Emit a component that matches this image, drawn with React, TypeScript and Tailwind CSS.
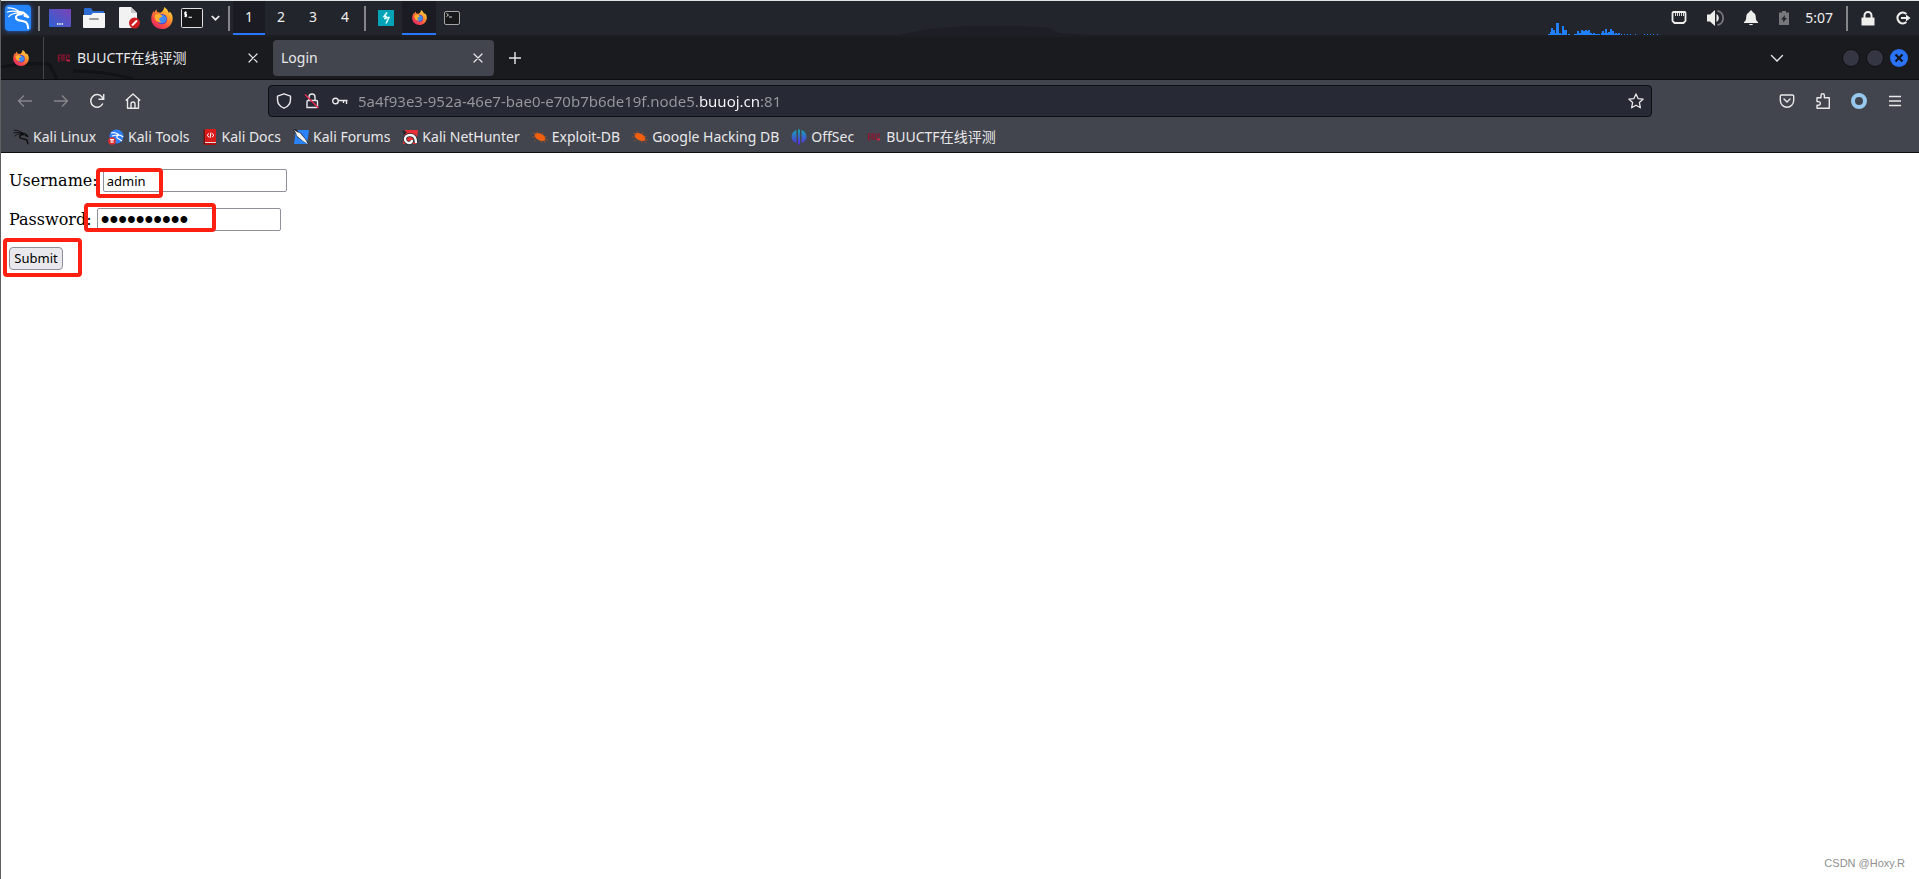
import React, { useState } from 'react';

interface IconProps {
  className?: string;
}

function Dragon({ className }: IconProps) {
  return (
    <svg viewBox="0 0 26 26" className={className} fill="none" stroke="currentColor" strokeLinecap="round" strokeLinejoin="round">
      <path strokeWidth="1.400" d="M2 2c5 0 9 1 13 4.500M1.500 6.500c5-1.500 9-1 13 .5M3 11.500c3-3 7-4.500 12-3.500" />
      <path strokeWidth="2.300" d="M13 7c4-1 6 0 8 2l3 3-4-1.500M17 9c-5 0-7 2-6 4.500 1.500 3.500 8 1.500 11 4.500 1.500 1.500 2 3.500 2 6" />
    </svg>
  );
}

function Firefox({ className }: IconProps) {
  return (
    <svg viewBox="0 0 24 24" className={className}>
      <defs>
        <linearGradient id="fxFlame" x1="0.9" y1="0.05" x2="0.2" y2="1">
          <stop offset="0" stopColor="#ffe14a" />
          <stop offset="0.35" stopColor="#ff9a2c" />
          <stop offset="0.7" stopColor="#fb4c42" />
          <stop offset="1" stopColor="#dc2468" />
        </linearGradient>
      </defs>
      <path fill="url(#fxFlame)" d="M14.500 0c3 2 4 4 5 6.500.6-.3.800-1 .8-1.700C23 7.500 24 10 23.600 13.500 23 19.500 18 24 12 24 5.500 24 .3 19.200.3 12.800.3 9.500 1.300 6.500 3.200 4.200c0 .8.1 1.500.4 2C4.200 4.500 5 3.200 6 2.400c0 1.500.4 2.500 1.300 3.400 1.200-.2 2.200.1 3 .6 1.700-1.300 3.800-2.900 4.200-6.400z" />
      <circle cx="12" cy="13.200" r="5.600" fill="#5b3fc4" />
      <path fill="#3f8cf3" d="M8 9.500c3-2.500 8-.5 9 3-.2 3-2 5-5 5.300-3.500 0-5-3-4-8.300z" />
      <path fill="#ffb02e" d="M4 9c2.500-2 6-1.500 8.500.8-1 1.700-3 1.400-3.500 2.700-.4 1.600.5 3 2.500 4.200-4.500.8-8-2.700-7.500-7.700z" />
    </svg>
  );
}

function Buu({ className }: IconProps) {
  return (
    <svg viewBox="0 0 16 16" className={className} fill="none" stroke="#8e1530" strokeWidth="1.200">
      <path d="M2.500 5v6M2 5h3M2 8h3M2 11h2M6 11V5h3M8 5v6M10.500 11V6M10 5h3v3" />
      <path stroke="#d52444" d="M11 10.500h3" strokeWidth="1.800" />
    </svg>
  );
}

function Close({ className }: IconProps) {
  return (
    <svg viewBox="0 0 16 16" className={className} fill="none" stroke="currentColor" strokeWidth="1.200" strokeLinecap="round">
      <path d="M4 4l8 8M12 4l-8 8" />
    </svg>
  );
}

function Bug() {
  return (
    <svg viewBox="0 0 16 16" className="size-4" fill="none" stroke="#b8541f" strokeWidth="0.600">
      <ellipse cx="8" cy="8" rx="5.800" ry="3.300" transform="rotate(28 8 8)" fill="#f2600f" stroke="none" />
      <path d="M1 4l4 1.500M0 8h3M4 11l-2 1M6 5L5 2M10 6l1-3M12 8l3-1M12 11l4 0M9 11l1 3M12 12l2 2" />
    </svg>
  );
}

function ToolsIcon() {
  return (
    <svg viewBox="0 0 16 16" className="size-4">
      <circle cx="8.500" cy="7.500" r="7" fill="#2f7df6" />
      <path d="M3 4c3-1 6 0 8 2 2 0 3 1 4 2M4 7c3-1 5-1 7-1-3 1-3 3 0 4l3 2" fill="none" stroke="#fff" strokeWidth="1.200" />
      <circle cx="4" cy="12" r="3.800" fill="#dd2c2c" />
      <path d="M2 10.500h4M3.200 10.500v3.500M4.900 10.500v3.500" stroke="#fff" fill="none" />
    </svg>
  );
}

function DocsIcon() {
  return (
    <svg viewBox="0 0 16 16" className="size-4">
      <path fill="#6d1414" d="M1.500 1l2-1v16l-2-1z" />
      <path fill="#d91a1a" d="M3 0h11v13H3z" />
      <path fill="#e8d9d9" d="M3 13h11v1H3z" />
      <path fill="#a81212" d="M3 14h11v2H3z" />
      <path d="M7 4.500l-2 1.800 2 1.800M10 4.500l2 1.800-2 1.800M9 3.500L8 9" stroke="#fff" fill="none" />
    </svg>
  );
}

function ForumsIcon() {
  return (
    <svg viewBox="0 0 16 16" className="size-4">
      <path fill="#2a83f8" d="M3 1h13l-2 14H1z" />
      <path fill="#23262d" d="M0 1l3-1 3 3 2 1 6 8 2 3-5-2-7-5-1-3z" />
      <path fill="#f3f3f3" d="M1 1l3 2 3 1 5 6 3 5-5-3-6-5-1-3z" />
    </svg>
  );
}

function NetHunterIcon() {
  return (
    <svg viewBox="0 0 16 16" className="size-4">
      <path fill="#ec2f36" d="M3 1h13l-2 14H1z" />
      <path d="M14 14c0-5-2-8-6-8-3 0-5 2-5 4s2 4 4 4 3-1 3-3" fill="none" stroke="#23262d" strokeWidth="4" />
      <path d="M14 14c0-5-2-8-6-8-3 0-5 2-5 4s2 4 4 4 3-1 3-3" fill="none" stroke="#f5f5f5" strokeWidth="2.400" />
      <path fill="#23262d" d="M0 1l5 2-3 3z" />
    </svg>
  );
}

function OffSecIcon() {
  return (
    <svg viewBox="0 0 16 16" className="size-4">
      <defs>
        <linearGradient id="offsec" x1="0" y1="0" x2="0" y2="1">
          <stop offset="0" stopColor="#16a5b5" />
          <stop offset="1" stopColor="#5a2be0" />
        </linearGradient>
      </defs>
      <path fill="url(#offsec)" d="M5.500 1v13C2.500 13 .5 11 .5 7.800S2.500 2 5.500 1zM7 .5h2v15H7zM10.500 1v13c3-1 5-3 5-6.200S13.500 2 10.500 1z" />
    </svg>
  );
}

const bookmarks = [
  { label: 'Kali Linux', icon: <Dragon className="size-4 text-[#0b0c0e]" /> },
  { label: 'Kali Tools', icon: <ToolsIcon /> },
  { label: 'Kali Docs', icon: <DocsIcon /> },
  { label: 'Kali Forums', icon: <ForumsIcon /> },
  { label: 'Kali NetHunter', icon: <NetHunterIcon /> },
  { label: 'Exploit-DB', icon: <Bug /> },
  { label: 'Google Hacking DB', icon: <Bug /> },
  { label: 'OffSec', icon: <OffSecIcon /> },
  { label: 'BUUCTF在线评测', icon: <Buu className="size-4" /> },
];

// bar heights in px, oldest sample last
const cpuLoad = [1, 3, 7, 5, 2, 12, 12, 2, 1, 9, 5, 5, 0, 1, 0, 0, 0, 1, 1, 4, 2, 5, 4, 4, 5, 4, 5, 2, 1, 2, 1, 1, 1, 0, 2, 4, 2, 6, 2, 3, 6, 4, 1, 2, 1, 2, 0, 1, 0, 1, 0, 1, 0, 1, 0, 0, 1, 0, 0, 0, 0, 0, 1, 0, 1, 0, 1, 0, 1, 0, 1];

function Separator() {
  return <div className="h-[25px] w-0.5 shrink-0 bg-[#85868a]" />;
}

function Panel() {
  const [workspace, setWorkspace] = useState(1);
  return (
    <header className="relative flex h-[35px] shrink-0 items-center justify-between border-t border-[#dfe5e5] bg-[#23252d] text-[#eeeeec]">
      <svg viewBox="0 0 190 10" className="absolute bottom-0 left-[898px] h-2.5 w-[190px]">
        <path fill="#1e1f26" d="M0 10C30 2 70 0 105 1l38 1c10 0 13 6 19 6l28 2z" />
      </svg>

      <div className="relative flex h-full items-center">
        <button aria-label="Applications" className="mr-0.5 ml-1 flex size-[26px] items-center justify-center rounded-sm bg-[#2484fb] shadow-[0_0_4px_#2367d8]">
          <Dragon className="size-6 text-white" />
        </button>
        <div className="ml-[5px] flex"><Separator /></div>
        <div className="ml-[9px] flex items-center gap-3">
          <button aria-label="Show desktop">
            <svg viewBox="0 0 22 18" className="h-[18px] w-[22px]">
              <defs>
                <linearGradient id="desk" x1="0" y1="1" x2="1" y2="0">
                  <stop offset="0" stopColor="#2e62d6" />
                  <stop offset="1" stopColor="#7b43b4" />
                </linearGradient>
              </defs>
              <rect width="22" height="18" rx="1" fill="url(#desk)" />
              <path d="M8 15h1.500M10.300 15h1.500M12.600 15h1.500" stroke="#fff" strokeWidth="1.500" />
            </svg>
          </button>
          <button aria-label="Files">
            <svg viewBox="0 0 22 20" className="h-5 w-[22px]">
              <path fill="#2c6bd3" d="M1 1a1 1 0 011-1h6l2 3h10a1 1 0 011 1v5H1z" />
              <path fill="#f4f4f4" d="M0 7h8l2-2h12v14a1 1 0 01-1 1H1a1 1 0 01-1-1z" />
              <path stroke="#9b9b9b" strokeWidth="1.800" strokeLinecap="round" d="M7 11h8" />
            </svg>
          </button>
          <button aria-label="Text editor" className="ml-0.5">
            <svg viewBox="0 0 22 22" className="size-[22px]">
              <path fill="#f2f2f2" d="M1 0h11l6 6v15H1a1 1 0 01-1-1V1a1 1 0 011-1z" />
              <path fill="#c6c6c6" d="M12 0l6 6h-6z" />
              <circle cx="15.500" cy="16" r="5.500" fill="#cf1c20" />
              <path d="M13 18.500l5-5" stroke="#fff" strokeWidth="2" />
            </svg>
          </button>
          <button aria-label="Firefox" className="-ml-0.5"><Firefox className="size-[22px]" /></button>
          <button aria-label="Terminal" className="-ml-1">
            <svg viewBox="0 0 22 20" className="h-5 w-[22px]">
              <rect x="0.500" y="0.500" width="21" height="19" rx="1" fill="#17181a" stroke="#e2e2e2" />
              <path d="M5.800 4.500H3.800v1.800h1.700v1.800H3.300M4.600 3.200v6M7.500 9.200h3.500" fill="none" stroke="#fff" strokeWidth="1.100" />
            </svg>
          </button>
        </div>
        <button aria-label="More terminals" className="mr-2 ml-2">
          <svg viewBox="0 0 9 6" className="h-1.5 w-[9px]" fill="none" stroke="#eee" strokeWidth="1.700"><path d="M0.800 1l3.700 3.700L8.200 1" /></svg>
        </button>
        <Separator />
        <div className="ml-[3px] flex h-full text-sm">
          {[1, 2, 3, 4].map((n) => (
            <button
              key={n}
              onClick={() => setWorkspace(n)}
              className={n === workspace ? 'w-8 border-b-2 border-[#2777ff] bg-[#1b1c23]' : 'w-8 border-b-2 border-transparent'}
            >
              {n}
            </button>
          ))}
        </div>
        <div className="ml-[3px] flex"><Separator /></div>
        <button aria-label="Burp Suite" className="mr-2 ml-3">
          <svg viewBox="0 0 16 16" className="size-4">
            <path fill="#04a3b8" d="M0 0h16v16H0z" />
            <path d="M9 2.500L6 6.500h2v2H6M8 7.500h3L8 13.500" fill="none" stroke="#e9fdff" strokeWidth="1.500" />
          </svg>
        </button>
        <button aria-label="Login - Firefox" className="flex h-full w-[34px] items-center justify-center border-b-2 border-[#2777ff] bg-[#1b1c23]">
          <Firefox className="size-[15px]" />
        </button>
        <button aria-label="Terminal window" className="ml-2">
          <svg viewBox="0 0 16 14" className="h-3.5 w-4">
            <rect x="0.500" y="0.500" width="15" height="13" rx="1.500" fill="#17181a" stroke="#a5a5a5" />
            <path d="M2.500 2.500l2 1.500-2 1.500M5 6h3" fill="none" stroke="#e5e5e5" strokeWidth="0.900" />
          </svg>
        </button>
      </div>

      <div className="flex h-full items-center pr-2">
        <svg viewBox="0 0 111 12" className="mr-3 h-3 w-[111px] self-end" shapeRendering="crispEdges">
          {cpuLoad.map((h, i) => (
            <rect key={i} x={Math.round(i * 1.55)} y={12 - h} width={h > 0 ? (i > 46 ? 1 : 2) : 0} height={h} fill="#2080ff" />
          ))}
        </svg>
        <div className="flex items-center">
          <svg viewBox="0 0 16 14" className="h-3.5 w-4">
            <path d="M2.500 1h11a1 1 0 011 1v8l-2 2h-9l-2-2V2a1 1 0 011-1z" fill="none" stroke="#eeeeec" strokeWidth="1.800" />
            <path d="M4.500 2v3M6.500 2v3M8.500 2v3M10.500 2v3M12.500 2v3" stroke="#eeeeec" strokeWidth="0.900" />
          </svg>
          <svg viewBox="0 0 18 18" className="ml-5 size-[18px]">
            <path fill="#eeeeec" d="M0 5.500h3L8 1v16l-5-4.500H0zM9.500 5c3 1.500 3 6.500 0 8z" />
            <path fill="none" stroke="#77787c" strokeWidth="1.800" d="M10.500 2c7.500 1 7.500 13 0 14" />
          </svg>
          <svg viewBox="0 0 16 16" className="ml-[18px] size-4" fill="#eeeeec">
            <path d="M8 0.500c1 0 1.500.6 1.500 1.500C12 3 12.800 5 12.800 7.500c0 2.500.7 3.500 2.200 4.500v1H1v-1c1.500-1 2.200-2 2.200-4.500C3.200 5 4 3 6.500 2 6.500 1.100 7 .5 8 .5zM6 14h4c-.4 1.600-3.600 1.600-4 0z" />
          </svg>
          <svg viewBox="0 0 10 14" className="ml-5 h-3.5 w-2.5">
            <path fill="#77787b" d="M3 0h4v1.500h3V14H0V1.500h3z" />
            <path fill="#23252d" d="M6 4L2 8.500h2.300L4 11.500l4-4.500H5.700z" />
          </svg>
          <time className="ml-4 text-sm">5:07</time>
        </div>
        <div className="ml-[13px] flex"><Separator /></div>
        <svg viewBox="0 0 14 15" className="ml-[13px] h-[15px] w-3.5">
          <path fill="#eeeeec" d="M1 6.500h12a.5.5 0 01.5.5v7.500H.5V7a.5.5 0 01.5-.5z" />
          <path fill="none" stroke="#eeeeec" strokeWidth="2" d="M3.500 7V4.500a3.500 3.500 0 017 0V7" />
        </svg>
        <svg viewBox="0 0 16 14" className="ml-5 h-3.5 w-4">
          <path fill="none" stroke="#eeeeec" strokeWidth="2.200" d="M11.300 3a5.300 5.300 0 100 8" />
          <path fill="#eeeeec" d="M6 6h5V3.500L15.500 7 11 10.500V8H6z" />
        </svg>
      </div>
    </header>
  );
}

function TabStrip() {
  return (
    <div className="relative flex h-[45px] shrink-0 items-center justify-between border-t-2 border-b border-t-[#1d1e23] border-b-[#0c0d10] bg-[#1a1b1f] text-sm text-[#e8e8ea]">
      <svg viewBox="0 0 140 18" className="absolute bottom-0 left-0 h-[18px] w-[140px]" fill="none" stroke="#121317" strokeWidth="3">
        <path d="M0 6c16-3 32-4 48-3l8 15M72 10c20 0 40 2 60 8" />
      </svg>
      <div className="relative flex h-full items-center">
        <button aria-label="Firefox View" className="flex h-full w-[43px] items-center justify-center border-r border-[#46474c] pr-0.5">
          <Firefox className="size-4" />
        </button>
        <div className="flex w-[229px] items-center justify-between px-3">
          <button className="flex items-center gap-[5px]">
            <Buu className="size-4" />
            <span>BUUCTF在线评测</span>
          </button>
          <button aria-label="Close BUUCTF" className="flex"><Close className="size-4" /></button>
        </div>
        <div className="flex h-9 w-[221px] items-center justify-between rounded bg-[#42454d] px-2">
          <button>Login</button>
          <button aria-label="Close Login" className="flex"><Close className="size-4" /></button>
        </div>
        <button aria-label="New tab" className="ml-3.5">
          <svg viewBox="0 0 14 14" className="size-3.5" fill="none" stroke="currentColor" strokeWidth="1.400"><path d="M7 1v12M1 7h12" /></svg>
        </button>
      </div>
      <div className="flex items-center gap-1.5 pr-[11px]">
        <button aria-label="List all tabs" className="mr-[52px]">
          <svg viewBox="0 0 14 8" className="h-2 w-3.5" fill="none" stroke="currentColor" strokeWidth="1.300" strokeLinecap="round"><path d="M1.500 1.500L7 7l5.500-5.500" /></svg>
        </button>
        <button aria-label="Minimize" className="size-[18px] rounded-full border border-[#0f1014] bg-[#343743]" />
        <button aria-label="Maximize" className="size-[18px] rounded-full border border-[#0f1014] bg-[#343743]" />
        <button aria-label="Close window" className="flex size-[18px] items-center justify-center rounded-full bg-[#2b73f6] text-[#10131b]">
          <svg viewBox="0 0 10 10" className="size-2.5" fill="none" stroke="currentColor" strokeWidth="2.200"><path d="M1.500 1.500l7 7M8.500 1.500l-7 7" /></svg>
        </button>
      </div>
    </div>
  );
}

function Toolbar() {
  return (
    <div className="flex h-10 shrink-0 items-center bg-[#42454d] pt-0.5 text-[#e8e8ea]">
      <nav className="flex w-[267px] shrink-0 items-center gap-5 pl-4">
        <button aria-label="Back" className="text-[#85878c]">
          <svg viewBox="0 0 16 16" className="size-4" fill="none" stroke="currentColor" strokeWidth="1.300"><path d="M15 8H1.500M7 2.500L1.500 8 7 13.500" /></svg>
        </button>
        <button aria-label="Forward" className="text-[#85878c]">
          <svg viewBox="0 0 16 16" className="size-4" fill="none" stroke="currentColor" strokeWidth="1.300"><path d="M1 8h13.500M9 2.500L14.500 8 9 13.500" /></svg>
        </button>
        <button aria-label="Reload">
          <svg viewBox="0 0 16 16" className="size-4" fill="none" stroke="currentColor" strokeWidth="1.500"><path d="M13.800 10.500A6.300 6.300 0 1113 4l1.500 2M14.700 1v5.300H9.500" /></svg>
        </button>
        <button aria-label="Home">
          <svg viewBox="0 0 16 16" className="size-4" fill="none" stroke="currentColor" strokeWidth="1.400" strokeLinejoin="round"><path d="M0.800 7.500L8 1l7.200 6.500M2.500 6.500v8.700h11V6.500M6 15v-4a2 2 0 014 0v4" /></svg>
        </button>
      </nav>
      <div className="flex h-8 flex-1 items-center rounded border border-[#0e0f13] bg-[#272935] px-[7px]">
        <svg viewBox="0 0 16 16" className="size-4 shrink-0" fill="none" stroke="currentColor" strokeWidth="1.400" strokeLinejoin="round">
          <path d="M8 .8l6.500 2.300v3.400c0 4-2 7-6.500 8.700-4.500-1.700-6.500-4.700-6.500-8.700V3.100z" />
        </svg>
        <svg viewBox="0 0 16 16" className="ml-3 size-4 shrink-0" fill="none" stroke="currentColor" strokeWidth="1.400">
          <path d="M5 7V4a3 3 0 016 0v3M3 14.500V8.500a1 1 0 011-1h8.500a1 1 0 011 1v5a1 1 0 01-1 1z" />
          <path d="M1 1.500l13.500 13.500" stroke="#e22850" strokeWidth="1.500" />
        </svg>
        <svg viewBox="0 0 16 10" className="ml-3 h-2.5 w-4 shrink-0" fill="none" stroke="currentColor" strokeWidth="1.400">
          <circle cx="3.500" cy="5" r="2.800" />
          <path d="M6.300 4.500H15.500M11.500 4.500V7M14.500 4.500V8" />
        </svg>
        <input
          aria-label="Address"
          defaultValue="5a4f93e3-952a-46e7-bae0-e70b7b6de19f.node5.buuoj.cn:81"
          className="ml-2.5 min-w-0 flex-1 bg-[linear-gradient(90deg,#96989d_341px,#fbfbfe_341px,#fbfbfe_402px,#96989d_402px)] bg-clip-text text-[15px] text-transparent caret-white outline-none"
        />
        <button aria-label="Bookmark this page">
          <svg viewBox="0 0 16 16" className="size-4" fill="none" stroke="currentColor" strokeWidth="1.300" strokeLinejoin="round"><path d="M8 .9l2.100 4.700 5.100.5-3.800 3.500 1 5.200L8 12.200l-4.400 2.600 1-5.200L.8 6.100l5.100-.5z" /></svg>
        </button>
      </div>
      <div className="flex w-[267px] shrink-0 items-center justify-end gap-5 pr-4">
        <button aria-label="Save to Pocket">
          <svg viewBox="0 0 16 16" className="size-4" fill="none" stroke="currentColor" strokeWidth="1.400" strokeLinecap="round"><path d="M2.500 2h11a1.200 1.200 0 011.200 1.200V7.500a6.700 6.700 0 01-13.400 0V3.200A1.200 1.200 0 012.500 2zM5 6l3 3 3-3" /></svg>
        </button>
        <button aria-label="Extensions">
          <svg viewBox="0 0 16 16" className="size-4" fill="none" stroke="currentColor" strokeWidth="1.400" strokeLinejoin="round"><path d="M2 7V4.700h4V2.500a1.700 1.700 0 013.400 0v2.200h4.900v10.500H2v-3h1.500a1.800 1.800 0 000-3.600H2z" /></svg>
        </button>
        <button aria-label="Proxy">
          <svg viewBox="0 0 16 16" className="size-4"><circle cx="8" cy="8" r="6" fill="none" stroke="#97c9ef" strokeWidth="4" /></svg>
        </button>
        <button aria-label="Open application menu">
          <svg viewBox="0 0 16 16" className="size-4" stroke="currentColor" strokeWidth="1.300"><path d="M2 3.500h12M2 8h12M2 12.500h12" /></svg>
        </button>
      </div>
    </div>
  );
}

export default function App() {
  const [username, setUsername] = useState('admin');
  const [password, setPassword] = useState('password12');

  return (
    <div className="flex min-h-screen flex-col border-l border-[#5e5f62] bg-white font-['Noto_Sans','Noto_Sans_CJK_SC',sans-serif]">
      <Panel />
      <TabStrip />
      <Toolbar />
      <nav className="flex h-[33px] shrink-0 items-center gap-3 border-b border-[#0c0d10] bg-[#42454d] pt-0.5 pl-3 text-sm text-[#e8e8ea]">
        {bookmarks.map((b) => (
          <a key={b.label} href="#" className="flex items-center gap-1 whitespace-nowrap">
            {b.icon}
            {b.label}
          </a>
        ))}
      </nav>

      <main className="flex flex-1 flex-col">
        <form
          onSubmit={(e) => e.preventDefault()}
          className="flex flex-col gap-4 px-2 pt-4 font-['DejaVu_Serif',serif] text-base text-black"
        >
          <div className="relative flex h-[23px] items-center gap-[5px]">
            <label htmlFor="username">Username:</label>
            <input
              id="username"
              value={username}
              onChange={(e) => setUsername(e.target.value)}
              className="h-[23px] w-[184px] rounded-xs border border-[#8f8f9d] bg-white px-[3px] font-['Noto_Sans',sans-serif] text-[13px]"
            />
            <div className="pointer-events-none absolute -top-px left-[87px] h-[30px] w-[67px] rounded-sm border-4 border-[#ff2012]" />
          </div>
          <div className="relative flex h-[23px] items-center gap-[5px]">
            <label htmlFor="password">Password:</label>
            <input
              id="password"
              type="password"
              value={password}
              onChange={(e) => setPassword(e.target.value)}
              className="h-[23px] w-[184px] rounded-xs border border-[#8f8f9d] bg-white px-[3px] font-['Liberation_Sans',sans-serif] text-[25px]"
            />
            <div className="pointer-events-none absolute -top-[5px] left-[75px] h-[29px] w-[132px] rounded-sm border-4 border-[#ff2012]" />
          </div>
          <div className="relative flex h-[23px]">
            <button
              type="submit"
              className="w-[54px] rounded border border-[#8f8f9d] bg-[#e9e9ed] font-['Noto_Sans',sans-serif] text-[13px]"
            >
              Submit
            </button>
            <div className="pointer-events-none absolute -top-[9px] -left-1.5 h-[39px] w-[79px] rounded-sm border-4 border-[#ff2012]" />
          </div>
        </form>
        <footer className="mt-auto self-end pr-3.5 pb-2 font-['Liberation_Sans',sans-serif] text-[11px] text-[#8f8f8f]">CSDN @Hoxy.R</footer>
      </main>
    </div>
  );
}
